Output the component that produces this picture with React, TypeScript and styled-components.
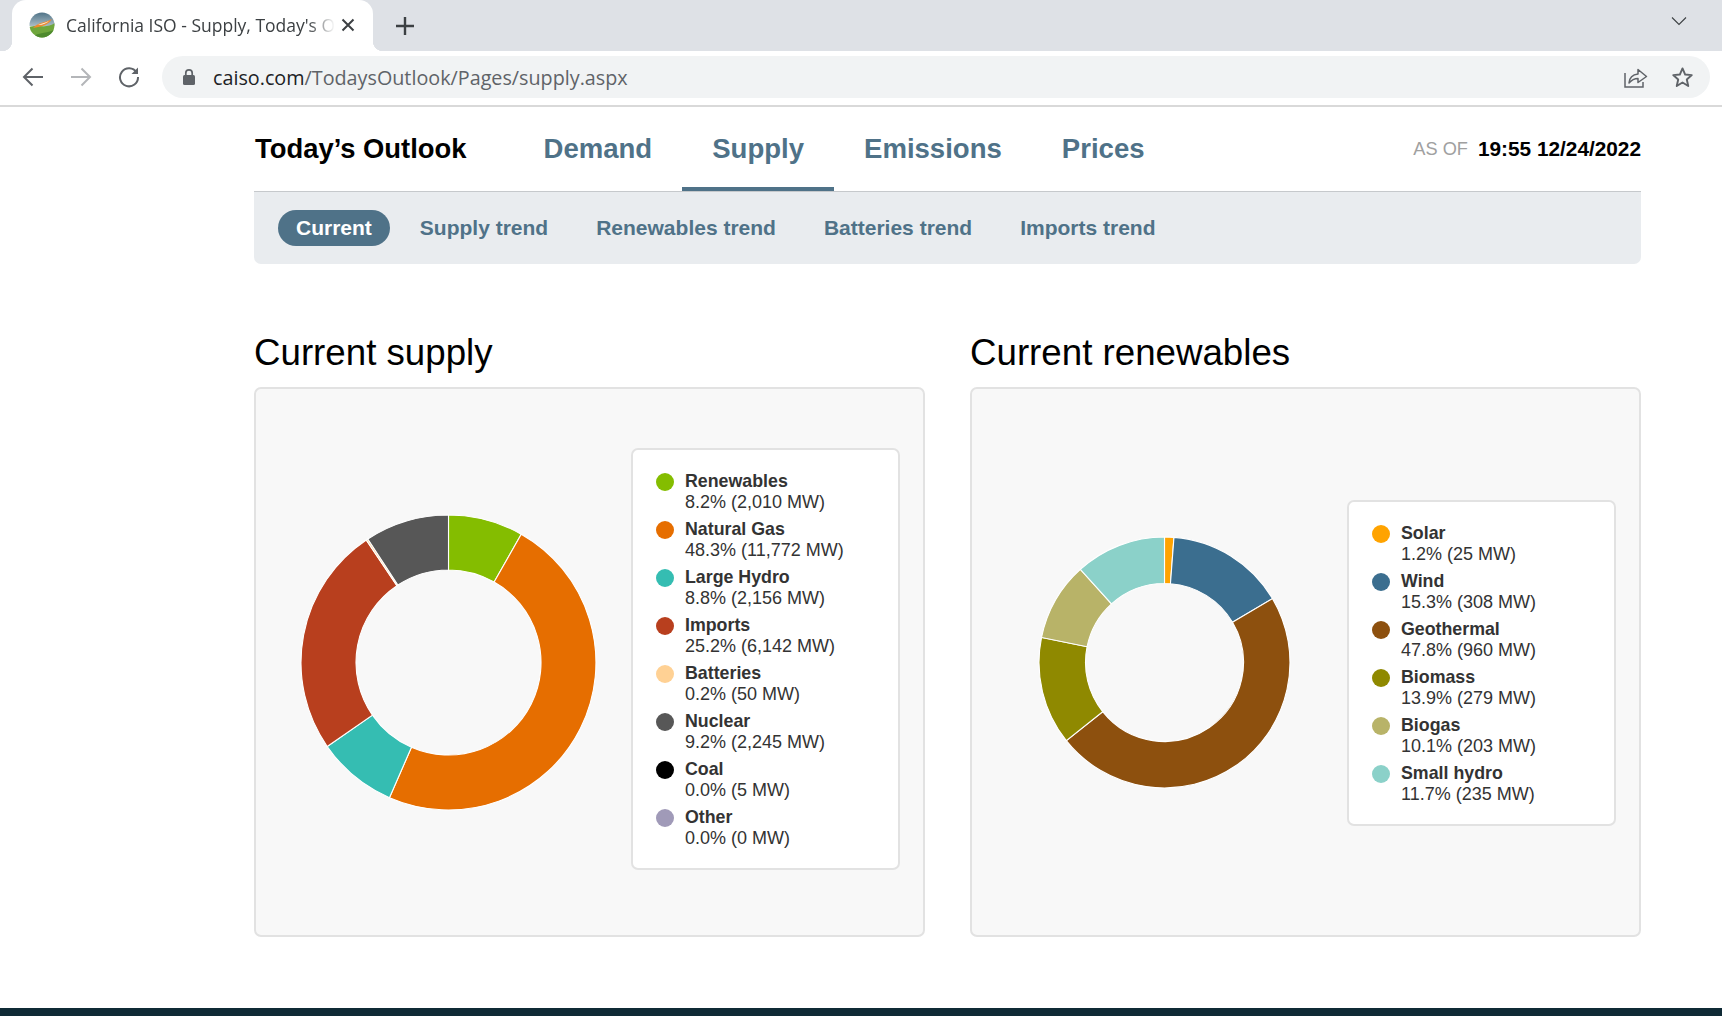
import styled, { createGlobalStyle } from "styled-components";

interface Slice {
  name: string;
  pct: number;
  mw: string;
  color: string;
}

const supply: Slice[] = [
  { name: "Renewables", pct: 8.2, mw: "2,010", color: "#84bd00" },
  { name: "Natural Gas", pct: 48.3, mw: "11,772", color: "#e66e00" },
  { name: "Large Hydro", pct: 8.8, mw: "2,156", color: "#35bdb2" },
  { name: "Imports", pct: 25.2, mw: "6,142", color: "#b83f1e" },
  { name: "Batteries", pct: 0.2, mw: "50", color: "#ffd194" },
  { name: "Nuclear", pct: 9.2, mw: "2,245", color: "#575757" },
  { name: "Coal", pct: 0.0, mw: "5", color: "#000000" },
  { name: "Other", pct: 0.0, mw: "0", color: "#a09ab8" },
];

const renewables: Slice[] = [
  { name: "Solar", pct: 1.2, mw: "25", color: "#ffa300" },
  { name: "Wind", pct: 15.3, mw: "308", color: "#3b6e8f" },
  { name: "Geothermal", pct: 47.8, mw: "960", color: "#8d500e" },
  { name: "Biomass", pct: 13.9, mw: "279", color: "#8f8900" },
  { name: "Biogas", pct: 10.1, mw: "203", color: "#b8b368" },
  { name: "Small hydro", pct: 11.7, mw: "235", color: "#8bd1c9" },
];

function arcPath(from: number, to: number, r: number, inner: number) {
  const pt = (rad: number, a: number) => {
    const t = (a / 100) * 2 * Math.PI - Math.PI / 2;
    return `${(rad * Math.cos(t)).toFixed(2)} ${(rad * Math.sin(t)).toFixed(2)}`;
  };
  const large = to - from > 50 ? 1 : 0;
  return `M${pt(r, from)} A${r} ${r} 0 ${large} 1 ${pt(r, to)} L${pt(inner, to)} A${inner} ${inner} 0 ${large} 0 ${pt(inner, from)} Z`;
}

function Donut({ data, r, inner }: { data: Slice[]; r: number; inner: number }) {
  const total = data.reduce((sum, d) => sum + d.pct, 0);
  let at = 0;
  return (
    <svg width={r * 2 + 4} height={r * 2 + 4} viewBox={`${-r - 2} ${-r - 2} ${r * 2 + 4} ${r * 2 + 4}`}>
      {data
        .filter((d) => d.pct > 0)
        .map((d) => {
          const from = at;
          at += (d.pct / total) * 100;
          return <path key={d.name} d={arcPath(from, at, r, inner)} fill={d.color} stroke="#fff" strokeWidth="1.1" />;
        })}
    </svg>
  );
}

function ChartCard({ data, r, inner, $shift }: { data: Slice[]; r: number; inner: number; $shift: number }) {
  return (
    <Card>
      <ChartArea>
        <Donut data={data} r={r} inner={inner} />
      </ChartArea>
      <Legend $shift={$shift}>
        {data.map((d) => (
          <LegendRow key={d.name}>
            <Dot $color={d.color} />
            <div>
              <LegendName>{d.name}</LegendName>
              <LegendValue>
                {d.pct.toFixed(1)}% ({d.mw} MW)
              </LegendValue>
            </div>
          </LegendRow>
        ))}
      </Legend>
    </Card>
  );
}

export default function App() {
  return (
    <Page>
      <GlobalStyle />
      <TabStrip>
        <Tab>
          <svg width="26" height="26" viewBox="0 0 26 26">
            <defs>
              <clipPath id="globe">
                <circle cx="13" cy="13" r="12.5" />
              </clipPath>
              <linearGradient id="sky" x1="0" y1="0" x2="0" y2="1">
                <stop offset="0" stopColor="#4d7186" />
                <stop offset="1" stopColor="#a9bcc6" />
              </linearGradient>
            </defs>
            <g clipPath="url(#globe)">
              <rect width="26" height="14" fill="url(#sky)" />
              <path d="M0 15 C8 12 18 17 26 11 V26 H0Z" fill="#6fa63c" />
              <path d="M2 26 C10 19 20 22 26 17 V26Z" fill="#4e8a2e" />
              <path d="M4 16 C9 10 16 11 23 7 C20 13 11 15 4 16Z" fill="#ee8a2e" />
              <path d="M9 13 C12 11.500 16 11 20 9 C16 12.500 12 13 9 13Z" fill="#f9f1e2" />
            </g>
          </svg>
          <TabTitle>California ISO - Supply, Today's Outlook</TabTitle>
          <svg width="14" height="14" viewBox="0 0 14 14" stroke="#3c4043" strokeWidth="2">
            <path d="M1.5 1.5 12.5 12.5M12.5 1.5 1.5 12.5" />
          </svg>
        </Tab>
        <NewTab>
          <svg width="20" height="20" viewBox="0 0 20 20" stroke="#3c4043" strokeWidth="2.4">
            <path d="M10 1V19M1 10H19" />
          </svg>
        </NewTab>
        <StripChevron>
          <svg width="16" height="10" viewBox="0 0 16 10" fill="none" stroke="#3c4043" strokeWidth="1.1">
            <path d="M1 1.5 8 8.5 15 1.5" />
          </svg>
        </StripChevron>
      </TabStrip>
      <Toolbar>
        <NavButton>
          <svg width="22" height="20" viewBox="0 0 22 20" fill="none" stroke="#5f6368" strokeWidth="2">
            <path d="M21 10H2M10.5 1.5 2 10l8.5 8.5" />
          </svg>
        </NavButton>
        <NavButton>
          <svg width="22" height="20" viewBox="0 0 22 20" fill="none" stroke="#b4b6b9" strokeWidth="2">
            <path d="M1 10H20M11.5 1.5 20 10l-8.5 8.5" />
          </svg>
        </NavButton>
        <NavButton>
          <svg width="22" height="22" viewBox="0 0 22 22" fill="none" stroke="#5f6368" strokeWidth="2">
            <path d="M18.6 6.5A9 9 0 1 0 20 11" />
            <path d="M20 1.5V8h-6.5z" fill="#5f6368" stroke="none" />
          </svg>
        </NavButton>
        <Omnibox>
          <svg width="14" height="18" viewBox="0 0 14 18">
            <rect x="1" y="7" width="12" height="10" rx="1.5" fill="#5f6368" />
            <path d="M3.8 8V5a3.2 3.2 0 0 1 6.4 0V8" fill="none" stroke="#5f6368" strokeWidth="1.7" />
          </svg>
          <Url>
            caiso.com<UrlPath>/TodaysOutlook/Pages/supply.aspx</UrlPath>
          </Url>
          <OmniIcons>
            <svg width="24" height="22" viewBox="0 0 24 22" fill="none" stroke="#5f6368" strokeWidth="1.5">
              <path d="M1 7V21H19V16" />
              <path d="M5 17C5.5 11 9.500 8.500 14 8V3.500L22.500 10.500 14 16.500V12.500C10.500 12.500 7.500 14 5 17Z" strokeLinejoin="round" />
            </svg>
            <svg width="23" height="22" viewBox="0 0 24 23" fill="none" stroke="#5f6368" strokeWidth="2">
              <path d="M12 2.500 14.800 8.900 21.700 9.500 16.500 14.100 18 20.900 12 17.300 6 20.900 7.500 14.100 2.300 9.500 9.200 8.900Z" strokeLinejoin="round" />
            </svg>
          </OmniIcons>
        </Omnibox>
      </Toolbar>

      <Main>
        <TopNav>
          <Brand>Today’s Outlook</Brand>
          <Tabs>
            <NavTab>Demand</NavTab>
            <NavTab $active>Supply</NavTab>
            <NavTab>Emissions</NavTab>
            <NavTab>Prices</NavTab>
          </Tabs>
          <AsOf>
            <AsOfLabel>AS OF</AsOfLabel>
            <strong>19:55 12/24/2022</strong>
          </AsOf>
        </TopNav>
        <SubBar>
          <SubItem $active>Current</SubItem>
          <SubItem>Supply trend</SubItem>
          <SubItem>Renewables trend</SubItem>
          <SubItem>Batteries trend</SubItem>
          <SubItem>Imports trend</SubItem>
        </SubBar>
        <Columns>
          <section>
            <SectionTitle>Current supply</SectionTitle>
            <ChartCard data={supply} r={147.5} inner={92.5} $shift={-7} />
          </section>
          <section>
            <SectionTitle>Current renewables</SectionTitle>
            <ChartCard data={renewables} r={125.5} inner={79} $shift={1} />
          </section>
        </Columns>
      </Main>
      <Footer />
    </Page>
  );
}

const GlobalStyle = createGlobalStyle`
  html, body {
    margin: 0;
    padding: 0;
    background: #fff;
  }
  body {
    font-family: "Liberation Sans", Arial, sans-serif;
  }
  * {
    box-sizing: border-box;
  }
`;

const Page = styled.div`
  display: flex;
  flex-direction: column;
  width: 1722px;
  height: 1016px;
  overflow: hidden;
`;

const TabStrip = styled.div`
  display: flex;
  align-items: flex-end;
  flex: none;
  height: 51px;
  padding-left: 12px;
  background: #dee1e6;
`;

const Tab = styled.div`
  position: relative;
  display: flex;
  align-items: center;
  width: 361px;
  height: 51px;
  padding: 0 18px 2px 17px;
  background: #fff;
  border-radius: 14px 14px 0 0;
  &::before,
  &::after {
    content: "";
    position: absolute;
    bottom: 0;
    width: 10px;
    height: 10px;
  }
  &::before {
    left: -10px;
    background: radial-gradient(circle at 0 0, transparent 10px, #fff 10.5px);
  }
  &::after {
    right: -10px;
    background: radial-gradient(circle at 100% 0, transparent 10px, #fff 10.5px);
  }
`;

const TabTitle = styled.span`
  flex: 1;
  margin: 0 6px 0 11px;
  overflow: hidden;
  white-space: nowrap;
  color: #3c4043;
  font-family: "Open Sans", sans-serif;
  font-size: 17.5px;
  -webkit-mask-image: linear-gradient(to right, #000 90%, transparent 100%);
  mask-image: linear-gradient(to right, #000 90%, transparent 100%);
`;

const NewTab = styled.div`
  display: flex;
  align-items: center;
  height: 51px;
  margin-left: 22px;
`;

const StripChevron = styled.div`
  display: flex;
  align-items: center;
  height: 42px;
  margin-left: auto;
  margin-right: 35px;
  align-self: flex-start;
`;

const Toolbar = styled.div`
  display: flex;
  align-items: center;
  flex: none;
  height: 56px;
  padding: 0 12px 2px 22px;
  background: #fff;
  border-bottom: 2px solid #d9d9d9;
`;

const NavButton = styled.div`
  display: flex;
  justify-content: center;
  width: 22px;
  margin-right: 26px;
  &:nth-child(3) {
    margin-right: 22px;
  }
`;

const Omnibox = styled.div`
  display: flex;
  align-items: center;
  flex: 1;
  height: 42px;
  padding: 0 16px 0 20px;
  background: #f1f3f4;
  border-radius: 21px;
`;

const Url = styled.span`
  margin-left: 17px;
  padding-top: 1px;
  color: #202124;
  font-family: "Open Sans", sans-serif;
  font-size: 19.76px;
`;

const UrlPath = styled.span`
  color: #5f6368;
`;

const OmniIcons = styled.div`
  display: flex;
  align-items: center;
  gap: 23px;
  margin-left: auto;
`;

const Main = styled.main`
  flex: 1;
  width: 1387px;
  margin-left: 254px;
`;

const TopNav = styled.header`
  display: flex;
  align-items: stretch;
  height: 84px;
`;

const Brand = styled.h1`
  align-self: center;
  width: 258.5px;
  margin: 0 0 0 1px;
  color: #000;
  font-size: 27.4px;
  font-weight: 700;
`;

const Tabs = styled.nav`
  display: flex;
`;

const NavTab = styled.a<{ $active?: boolean }>`
  display: flex;
  align-items: center;
  padding: 3px 30px 0;
  color: #4f7288;
  font-size: 27.55px;
  font-weight: 700;
  border-bottom: 4px solid ${(p) => (p.$active ? "#4f7288" : "transparent")};
`;

const AsOf = styled.div`
  display: flex;
  align-items: center;
  gap: 10px;
  margin-left: auto;
  color: #000;
  font-size: 20.8px;
`;

const AsOfLabel = styled.span`
  color: #a0a0a0;
  font-size: 18.2px;
`;

const SubBar = styled.div`
  display: flex;
  align-items: center;
  gap: 12px;
  height: 73px;
  padding: 0 24px;
  background: #e9ecef;
  border-top: 1px solid #c6c9cc;
  border-radius: 0 0 7px 7px;
`;

const SubItem = styled.a<{ $active?: boolean }>`
  display: flex;
  align-items: center;
  height: 36px;
  padding: 0 18px;
  color: ${(p) => (p.$active ? "#fff" : "#4f7288")};
  background: ${(p) => (p.$active ? "#4f7288" : "transparent")};
  border-radius: 18px;
  font-size: 21px;
  font-weight: 700;
`;

const Columns = styled.div`
  display: grid;
  grid-template-columns: 671px 671px;
  gap: 45px;
  margin-top: 66px;
`;

const SectionTitle = styled.h2`
  margin: 0 0 11px;
  color: #000;
  font-size: 36.7px;
  font-weight: 400;
  line-height: 46px;
`;

const Card = styled.div`
  display: flex;
  align-items: center;
  height: 550px;
  padding-right: 23px;
  background: #f8f8f8;
  border: 2px solid #e2e2e2;
  border-radius: 7px;
`;

const ChartArea = styled.div`
  display: flex;
  flex: none;
  justify-content: center;
  width: 375px;
  padding-left: 9px;
`;

const Legend = styled.div<{ $shift: number }>`
  display: flex;
  flex: none;
  flex-direction: column;
  gap: 6px;
  width: 269px;
  margin-top: ${(p) => p.$shift}px;
  padding: 21px 22px 19px 23px;
  background: #fff;
  border: 2px solid #e2e2e2;
  border-radius: 7px;
`;

const LegendRow = styled.div`
  display: flex;
  gap: 11px;
`;

const Dot = styled.span<{ $color: string }>`
  flex: none;
  width: 18px;
  height: 18px;
  margin-top: 2px;
  background: ${(p) => p.$color};
  border-radius: 50%;
`;

const LegendName = styled.div`
  color: #333;
  font-size: 17.8px;
  font-weight: 700;
  line-height: 21px;
`;

const LegendValue = styled.div`
  color: #333;
  font-size: 18px;
  line-height: 21px;
`;

const Footer = styled.footer`
  flex: none;
  height: 8px;
  background: #0f2a35;
`;
